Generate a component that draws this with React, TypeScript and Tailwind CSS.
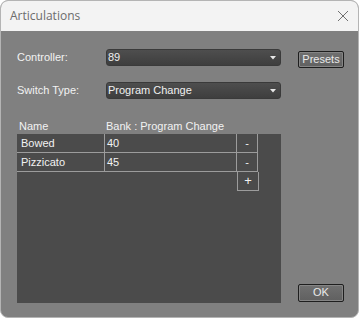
import React from 'react';

const font = { fontFamily: '"Liberation Sans", Arial, sans-serif' };

const Combo: React.FC<{ value: string }> = ({ value }) => (
  <div className="flex items-center justify-between w-[175px] h-[17px] rounded-[3px] border border-[#3a3a3a] bg-gradient-to-b from-[#4e4e4e] to-[#3e3e3e] pl-[1px] pr-[4px] text-[11px] text-[#f0f0f0]">
    <span>{value}</span>
    <svg width="6" height="4" viewBox="0 0 6 4">
      <path d="M0 0 L6 0 L3 3.5 Z" fill="#e8e8e8" />
    </svg>
  </div>
);

const Button: React.FC<{ label: string; h: string }> = ({ label, h }) => (
  <button
    className={`w-[46px] ${h} rounded-[2px] border border-[#1e1e1e] bg-gradient-to-b from-[#707070] to-[#606060] text-[11px] text-[#eaeaea] leading-none shadow-[inset_0_0_0_1px_#858585]`}
    style={font}
  >
    {label}
  </button>
);

const rows = [
  { name: 'Bowed', value: '40' },
  { name: 'Pizzicato', value: '45' },
];

export default function App() {
  return (
    <div className="w-[361px] h-[319px] bg-white" style={font}>
      <div className="w-[359px] h-[318px] rounded-[8px] border border-[#b4b4b4] overflow-hidden flex flex-col bg-[#808080]">
        <div className="h-[30px] shrink-0 bg-[#f3f3f3] flex items-center justify-between pl-[9px] pr-[8px]">
          <span className="text-[12px] text-[#6c6c6c]" style={{ fontFamily: '"Open Sans", "Noto Sans", sans-serif' }}>
            Articulations
          </span>
          <svg width="12" height="12" viewBox="0 0 12 12" className="mr-[1px]">
            <path d="M1 1 L11 11 M11 1 L1 11" stroke="#707070" strokeWidth="1" />
          </svg>
        </div>

        <div className="flex-1 pl-4 pt-[18px]">
          <div className="flex items-center h-[17px]">
            <span className="w-[89px] text-[11px] text-[#f2f2f2]">Controller:</span>
            <Combo value="89" />
            <div className="ml-[17px]">
              <Button label="Presets" h="h-[17px]" />
            </div>
          </div>

          <div className="flex items-center h-[17px] mt-4">
            <span className="w-[89px] text-[11px] text-[#f2f2f2]">Switch Type:</span>
            <Combo value="Program Change" />
          </div>

          <div className="flex items-center h-[16px] mt-[19px] text-[11px] text-[#f2f2f2]">
            <span className="w-[89px] pl-[2px]">Name</span>
            <span>Bank : Program Change</span>
          </div>

          <div className="flex items-end">
            <div className="w-[264px] h-[169px] bg-[#4b4b4b] text-[11px] text-[#f2f2f2]">
              {rows.map((r) => (
                <div key={r.name} className="flex h-[19px] w-[241px] border-b border-[#9c9c9c]">
                  <div className="w-[88px] border-r border-[#9c9c9c] pl-[4px] flex items-center">{r.name}</div>
                  <div className="w-[132px] border-r border-[#9c9c9c] pl-[2px] flex items-center">{r.value}</div>
                  <div className="w-[21px] border-r border-[#9c9c9c] flex items-center justify-center">-</div>
                </div>
              ))}
              <div className="ml-[220px] w-[22px] h-[19px] border-l border-r border-b border-[#9c9c9c] flex items-center justify-center text-[13px]">
                +
              </div>
            </div>
            <div className="ml-[17px]">
              <Button label="OK" h="h-[18px]" />
            </div>
          </div>
        </div>
      </div>
    </div>
  );
}
